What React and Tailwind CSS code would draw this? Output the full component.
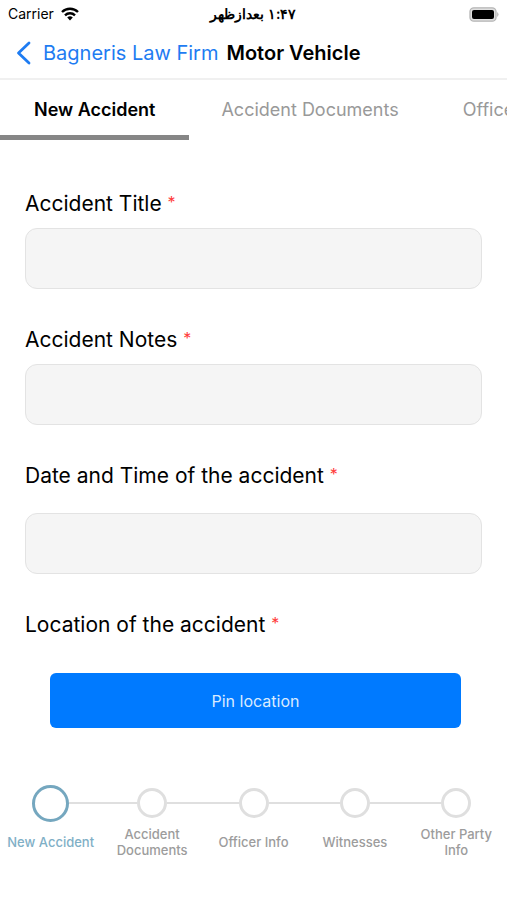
import { useState } from 'react';
import clsx from 'clsx';

const TABS = ['New Accident', 'Accident Documents', 'Officer Info', 'Witnesses', 'Other Party Info'];

const FIELDS = [
  { id: 'title', label: 'Accident Title', gap: 'mt-2' },
  { id: 'notes', label: 'Accident Notes', gap: 'mt-2' },
  { id: 'datetime', label: 'Date and Time of the accident', gap: 'mt-[21px]' }
];

export default function App() {
  const [active, setActive] = useState(0);

  return (
    <div className="min-h-screen overflow-x-hidden bg-white font-['Inter','Liberation_Sans',sans-serif] text-black">
      <StatusBar />
      <NavHeader />
      <TabBar active={active} onChange={setActive} />
      <AccidentForm />
      <Stepper active={active} onChange={setActive} />
    </div>
  );
}

function StatusBar() {
  return (
    <div className="grid h-7 grid-cols-3 items-center px-2 text-sm">
      <div className="flex items-center gap-1.5">
        <span>Carrier</span>
        <WifiIcon />
      </div>
      <span dir="rtl" className="text-center font-semibold whitespace-nowrap">
        ۱:۴۷ بعدازظهر
      </span>
      <div className="flex justify-end">
        <BatteryIcon />
      </div>
    </div>
  );
}

function NavHeader() {
  return (
    <header className="flex h-[52px] items-center border-b-2 border-[#f0f0f0] pl-4 text-xl whitespace-nowrap">
      <a href="#back" className="flex items-center gap-3 text-[#1e7cf2]">
        <svg width="15" height="24" viewBox="0 0 15 24" fill="none" stroke="currentColor" strokeWidth="2.8" strokeLinecap="round" strokeLinejoin="round">
          <path d="M13 2 L2.5 12 L13 22" />
        </svg>
        Bagneris Law Firm
      </a>
      <h1 className="ml-2 font-semibold">Motor Vehicle</h1>
    </header>
  );
}

function TabBar({ active, onChange }) {
  return (
    <div role="tablist" className="flex overflow-x-auto [scrollbar-width:none]">
      {TABS.map((tab, i) => (
        <button
          key={tab}
          role="tab"
          aria-selected={i === active}
          onClick={() => onChange(i)}
          className={clsx(
            'h-[60px] shrink-0 border-b-5 px-8 pt-1 text-lg whitespace-nowrap first:px-[34px]',
            i === active ? 'border-[#868686] font-semibold text-black' : 'border-transparent text-[#999999]'
          )}
        >
          {tab}
        </button>
      ))}
    </div>
  );
}

function AccidentForm() {
  return (
    <form className="px-[25px] pt-12" onSubmit={(e) => e.preventDefault()}>
      {FIELDS.map(field => (
        <div key={field.id} className="mb-[35px]">
          <label htmlFor={field.id} className="block text-[21px] leading-8">
            {field.label} <Required />
          </label>
          <input
            id={field.id}
            type="text"
            required
            className={clsx(
              'block h-[61px] w-full rounded-xl border border-[#e3e3e3] bg-[#f5f5f5] px-4 text-lg outline-none',
              field.gap
            )}
          />
        </div>
      ))}

      <label htmlFor="location" className="block text-[21px] leading-8">
        Location of the accident <Required />
      </label>
      <div className="mt-8 pr-[21px] pl-[25px]">
        <button id="location" type="button" className="block h-[55px] w-full rounded-md bg-[#007aff] text-base text-[#d9ebff]">
          Pin location
        </button>
      </div>
    </form>
  );
}

function Required() {
  return <span className="align-top text-base leading-7 text-[#ff3b3b]">*</span>;
}

// Progress indicator at the bottom of the form
function Stepper({ active, onChange }) {
  return (
    <ol className="mt-14 grid grid-cols-5">
      {TABS.map((step, i) => (
        <li key={step}>
          <button onClick={() => onChange(i)} className="w-full">
            <span className="flex h-[38px] items-center">
              <span className={clsx('h-0.5 flex-1', i > 0 && 'bg-[#dfdfdf]')} />
              <span
                className={clsx(
                  'rounded-full',
                  i === active ? 'size-[37px] border-[3px] border-[#75a7bf]' : 'size-[30px] border-[3px] border-[#dfdfdf]'
                )}
              />
              <span className={clsx('h-0.5 flex-1', i < TABS.length - 1 && 'bg-[#dfdfdf]')} />
            </span>
            <span
              className={clsx(
                'mt-1 flex h-8 items-center justify-center px-1 text-center text-[13px] leading-4 font-medium',
                i === active ? 'text-[#7fafc6]' : 'text-[#9c9c9c]'
              )}
            >
              {step}
            </span>
          </button>
        </li>
      ))}
    </ol>
  );
}

function WifiIcon() {
  return (
    <svg width="20" height="14" viewBox="0 0 18 14" fill="none" stroke="black" strokeWidth="2.4">
      <path d="M1 5 A11.5 11.5 0 0 1 17 5" />
      <path d="M4 8.3 A7.2 7.2 0 0 1 14 8.3" />
      <path d="M9 13.4 L6.2 10.6 A4 4 0 0 1 11.8 10.6 Z" fill="black" stroke="none" />
    </svg>
  );
}

function BatteryIcon() {
  return (
    <svg width="30" height="15" viewBox="0 0 30 15">
      <rect x="1" y="0.8" width="26" height="13.4" rx="3.8" fill="#e0e0e0" stroke="#b5b5b5" strokeWidth="1.3" />
      <rect x="3" y="2.9" width="22" height="9.2" rx="2" fill="black" />
      <path d="M28.3 5 Q30.6 7.5 28.3 10 Z" fill="#a8a8a8" />
    </svg>
  );
}
